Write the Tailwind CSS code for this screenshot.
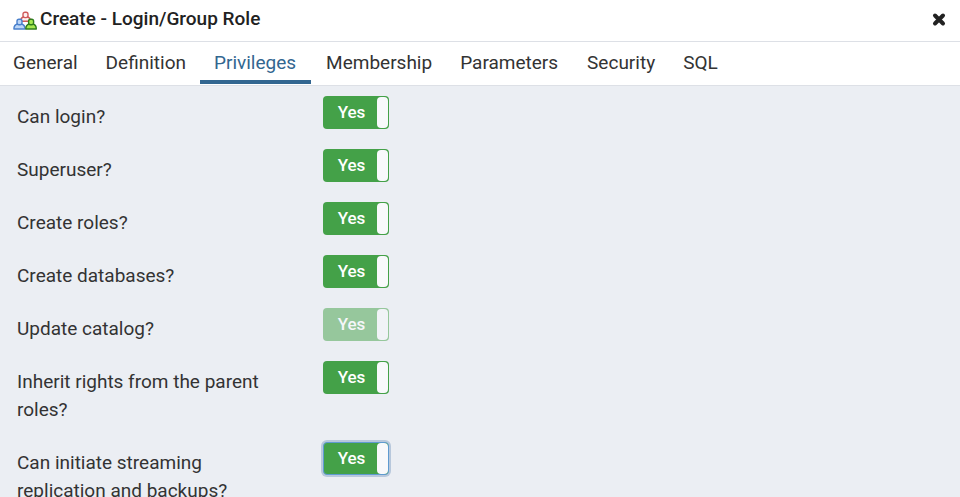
<!DOCTYPE html>
<html lang="en">
<head>
<meta charset="utf-8">
<title>Create - Login/Group Role</title>
<script src="https://cdn.jsdelivr.net/npm/@tailwindcss/browser@4"></script>
</head>
<body class="h-screen overflow-hidden bg-[#ebeef3] font-['Roboto',sans-serif] text-[19px] leading-7 text-[#333]">
<main class="flex h-screen flex-col">
  <header class="flex shrink-0 items-center border-b border-[#dde0e6] bg-white px-[13px] pt-[5px] pb-2 text-[#222]">
    <svg class="mt-1 mr-[3px] h-5 w-6 shrink-0" viewBox="0 0 24 20" stroke-width="1.4" stroke-linejoin="round" aria-hidden="true">
      <g fill="#fdeeee" stroke="#cf5a5a"><path d="M7.7 10.2C7.7 7.6 9.2 6.2 10.7 5.8H14.4C15.9 6.2 17.4 7.6 17.4 10.2Z"/><rect x="10" y="1.2" width="5" height="5.4" rx="2"/></g>
      <g fill="#bcd6f7" stroke="#4a80cc"><path d="M.9 18C.9 15.4 2.6 13.4 4.5 13H8.4C10.3 13.4 12 15.4 12 18Z"/><rect x="4" y="8.2" width="5" height="5.6" rx="2"/></g>
      <g fill="#a5e84f" stroke="#2f7d1c"><path d="M12.8 18C12.8 15.4 14.5 13.4 16.2 13H19.9C21.8 13.4 23.3 15.4 23.3 18Z"/><rect x="15.6" y="8.2" width="5" height="5.6" rx="2"/></g>
    </svg>
    <h1 class="text-[19px] font-medium">Create - Login/Group Role</h1>
    <button type="button" aria-label="Close" class="ml-auto">
      <svg class="h-4 w-4" viewBox="0 0 16 16" fill="none" stroke="#222" stroke-width="4" stroke-linecap="round"><path d="M4 4.5 12 12.5M12 4.5 4 12.5"/></svg>
    </button>
  </header>
  <nav class="flex shrink-0 border-b border-[#dde0e6] bg-white" aria-label="Role sections">
    <a href="#" class="border-b-4 border-transparent px-[13px] pt-[7px] pb-1">General</a>
    <a href="#" class="border-b-4 border-transparent pt-[7px] pr-[14px] pb-1 pl-[15px]">Definition</a>
    <a href="#" aria-current="page" class="mb-px border-b-4 border-[#326690] pt-[7px] pr-[15px] pb-[3px] pl-[14px] text-[#326690]">Privileges</a>
    <a href="#" class="border-b-4 border-transparent pt-[7px] pr-[14px] pb-1 pl-[15px]">Membership</a>
    <a href="#" class="border-b-4 border-transparent pt-[7px] pr-[14px] pb-1 pl-[14px]">Parameters</a>
    <a href="#" class="border-b-4 border-transparent pt-[7px] pr-[14px] pb-1 pl-[15px]">Security</a>
    <a href="#" class="border-b-4 border-transparent pt-[7px] pr-[14px] pb-1 pl-[14px]">SQL</a>
  </nav>
  <form class="flex min-h-0 flex-1 flex-col gap-[18px] overflow-hidden pt-[10px]">
    <div class="flex shrink-0 items-start">
      <label for="login" class="w-1/3 pt-[7px] pr-10 pl-[17px]">Can login?</label>
      <label class="relative ml-[3px] flex h-[33px] w-[66px] -mb-1 justify-between rounded bg-[#44a148] p-px text-white">
        <input id="login" type="checkbox" role="switch" checked class="sr-only">
        <span class="flex-1 pl-[2px] text-center text-[17px] leading-[31px] font-medium">Yes</span>
        <span class="w-[11px] rounded bg-[#f8f9fb]"></span>
      </label>
    </div>
    <div class="flex shrink-0 items-start">
      <label for="superuser" class="w-1/3 pt-[7px] pr-10 pl-[17px]">Superuser?</label>
      <label class="relative ml-[3px] flex h-[33px] w-[66px] -mb-1 justify-between rounded bg-[#44a148] p-px text-white">
        <input id="superuser" type="checkbox" role="switch" checked class="sr-only">
        <span class="flex-1 pl-[2px] text-center text-[17px] leading-[31px] font-medium">Yes</span>
        <span class="w-[11px] rounded bg-[#f8f9fb]"></span>
      </label>
    </div>
    <div class="flex shrink-0 items-start">
      <label for="roles" class="w-1/3 pt-[7px] pr-10 pl-[17px]">Create roles?</label>
      <label class="relative ml-[3px] flex h-[33px] w-[66px] -mb-1 justify-between rounded bg-[#44a148] p-px text-white">
        <input id="roles" type="checkbox" role="switch" checked class="sr-only">
        <span class="flex-1 pl-[2px] text-center text-[17px] leading-[31px] font-medium">Yes</span>
        <span class="w-[11px] rounded bg-[#f8f9fb]"></span>
      </label>
    </div>
    <div class="flex shrink-0 items-start">
      <label for="databases" class="w-1/3 pt-[7px] pr-10 pl-[17px]">Create databases?</label>
      <label class="relative ml-[3px] flex h-[33px] w-[66px] -mb-1 justify-between rounded bg-[#44a148] p-px text-white">
        <input id="databases" type="checkbox" role="switch" checked class="sr-only">
        <span class="flex-1 pl-[2px] text-center text-[17px] leading-[31px] font-medium">Yes</span>
        <span class="w-[11px] rounded bg-[#f8f9fb]"></span>
      </label>
    </div>
    <div class="flex shrink-0 items-start">
      <label for="catalog" class="w-1/3 pt-[7px] pr-10 pl-[17px]">Update catalog?</label>
      <label class="relative ml-[3px] flex h-[33px] w-[66px] -mb-1 justify-between rounded bg-[#44a148] p-px text-white opacity-50">
        <input id="catalog" type="checkbox" role="switch" checked disabled class="sr-only">
        <span class="flex-1 pl-[2px] text-center text-[17px] leading-[31px] font-medium">Yes</span>
        <span class="w-[11px] rounded bg-[#f8f9fb]"></span>
      </label>
    </div>
    <div class="flex shrink-0 items-start">
      <label for="inherit" class="w-1/3 pt-[7px] pr-10 pl-[17px]">Inherit rights from the parent roles?</label>
      <label class="relative ml-[3px] flex h-[33px] w-[66px] -mb-1 justify-between rounded bg-[#44a148] p-px text-white">
        <input id="inherit" type="checkbox" role="switch" checked class="sr-only">
        <span class="flex-1 pl-[2px] text-center text-[17px] leading-[31px] font-medium">Yes</span>
        <span class="w-[11px] rounded bg-[#f8f9fb]"></span>
      </label>
    </div>
    <div class="flex shrink-0 items-start">
      <label for="replication" class="w-1/3 pt-[7px] pr-10 pl-[17px]">Can initiate streaming replication and backups?</label>
      <label class="relative ml-[3px] flex h-[33px] w-[66px] -mb-1 justify-between rounded border border-[#5f9bd0] bg-[#44a148] text-white ring-2 ring-[#b8c8dc]">
        <input id="replication" type="checkbox" role="switch" checked class="sr-only">
        <span class="flex-1 pl-[2px] text-center text-[17px] leading-[31px] font-medium">Yes</span>
        <span class="w-[11px] rounded bg-[#f8f9fb]"></span>
      </label>
    </div>
  </form>
</main>
</body>
</html>
